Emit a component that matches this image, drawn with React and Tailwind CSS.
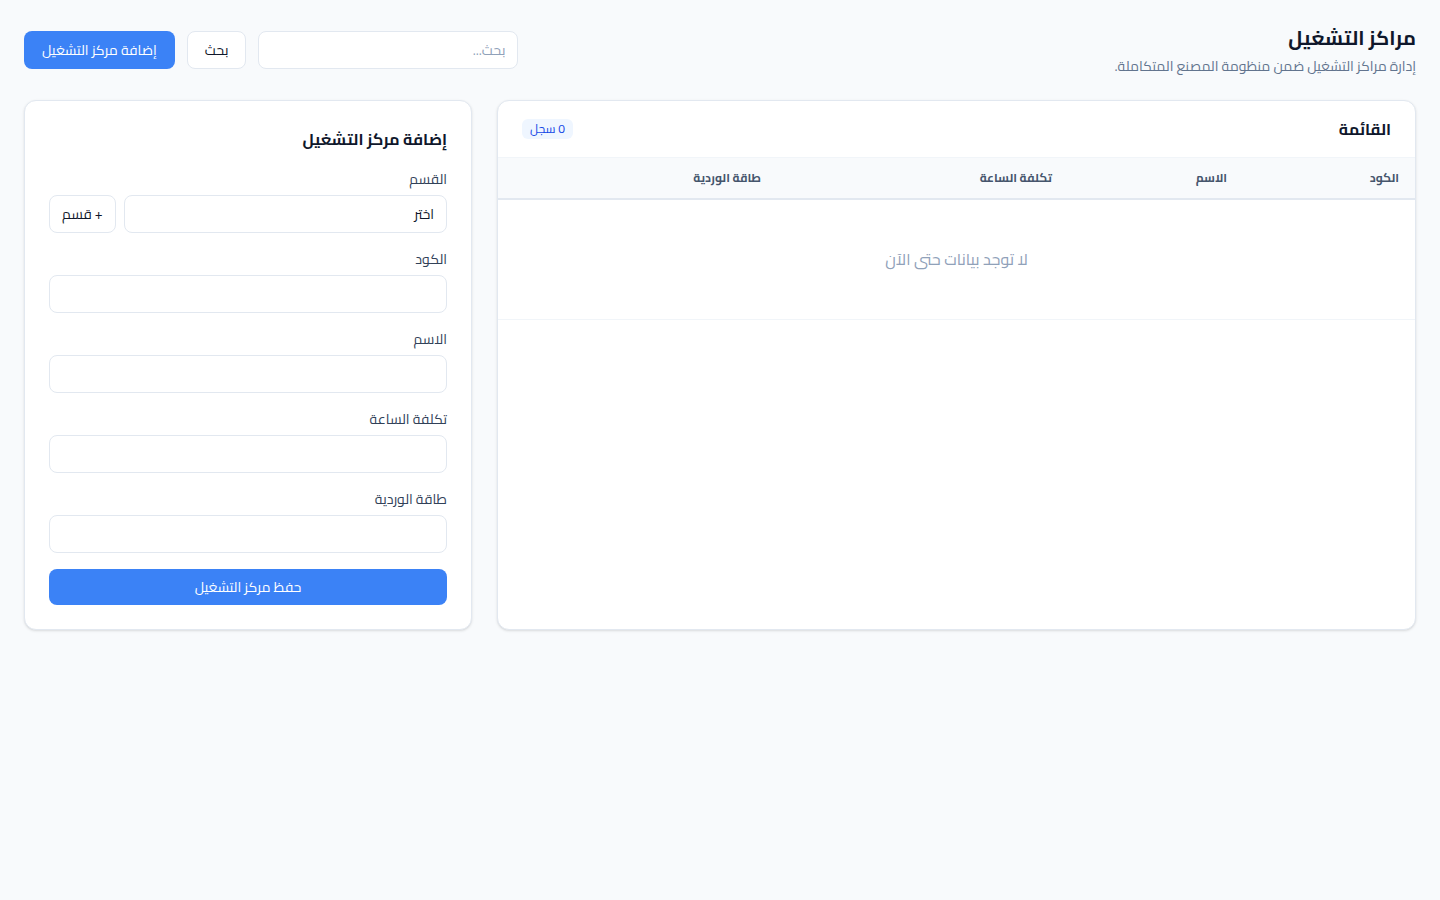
import React from 'react';

const fields = ['الكود', 'الاسم', 'تكلفة الساعة', 'طاقة الوردية'];

const Field = ({ label }) => (
  <div className="flex flex-col gap-1.5">
    <label className="text-sm text-slate-700">{label}</label>
    <input className="h-[38px] w-full rounded-lg border border-slate-200 bg-white px-3 text-sm outline-none" />
  </div>
);

export default function App() {
  return (
    <div dir="rtl" className="min-h-screen bg-[#f8fafc] px-6 py-6 text-slate-900" style={{ fontFamily: 'Cairo, "Noto Sans Arabic", sans-serif' }}>
      <div className="flex items-start justify-between">
        <div>
          <h1 className="text-xl font-bold leading-7 text-slate-900">مراكز التشغيل</h1>
          <p className="mt-1 text-sm text-slate-500">إدارة مراكز التشغيل ضمن منظومة المصنع المتكاملة.</p>
        </div>
        <div className="flex items-center gap-3 pt-[7px]">
          <input placeholder="بحث..." className="h-[38px] w-[260px] rounded-lg border border-slate-200 bg-white px-3 text-sm placeholder:text-slate-400 outline-none" />
          <button className="h-[38px] rounded-lg border border-slate-200 bg-white px-[17px] text-sm text-slate-900">بحث</button>
          <button className="h-[38px] rounded-lg bg-[#3b82f6] px-[18px] text-sm text-white">إضافة مركز التشغيل</button>
        </div>
      </div>

      <div className="mt-6 grid grid-cols-[1fr_448px] gap-[25px]">
        <div className="flex flex-col overflow-hidden rounded-xl border border-slate-200 bg-white shadow-sm">
          <div className="flex h-[57px] items-center justify-between border-b border-slate-100 px-6">
            <h2 className="text-base font-bold text-slate-900">القائمة</h2>
            <span className="rounded-md bg-blue-50 px-2 py-0.5 text-xs text-blue-700">0 سجل</span>
          </div>
          <table className="w-full text-right">
            <thead>
              <tr className="border-b-2 border-slate-200 bg-[#f8fafc] text-xs font-bold text-slate-600">
                <th className="h-[41px] w-[172px] px-4 font-bold">الكود</th>
                <th className="w-[175px] px-4 font-bold">الاسم</th>
                <th className="w-[291px] px-4 font-bold">تكلفة الساعة</th>
                <th className="px-4 font-bold">طاقة الوردية</th>
              </tr>
            </thead>
            <tbody>
              <tr className="border-b border-slate-100">
                <td colSpan={4} className="h-[120px] text-center text-base text-slate-400">لا توجد بيانات حتى الآن</td>
              </tr>
            </tbody>
          </table>
        </div>

        <div className="rounded-xl border border-slate-200 bg-white p-6 shadow-sm">
          <h2 className="text-base font-bold leading-7 text-slate-900">إضافة مركز التشغيل</h2>
          <div className="mt-4 flex flex-col gap-4">
            <div className="flex flex-col gap-1.5">
              <label className="text-sm text-slate-700">القسم</label>
              <div className="flex gap-2">
                <select className="h-[38px] flex-1 appearance-none rounded-lg border border-slate-200 bg-white px-3 text-sm outline-none">
                  <option>اختر</option>
                </select>
                <button className="h-[38px] rounded-lg border border-slate-200 bg-white px-3 text-sm">+ قسم</button>
              </div>
            </div>
            {fields.map((f) => (
              <Field key={f} label={f} />
            ))}
            <button className="h-9 w-full rounded-lg bg-[#3b82f6] text-sm text-white">حفظ مركز التشغيل</button>
          </div>
        </div>
      </div>
    </div>
  );
}
